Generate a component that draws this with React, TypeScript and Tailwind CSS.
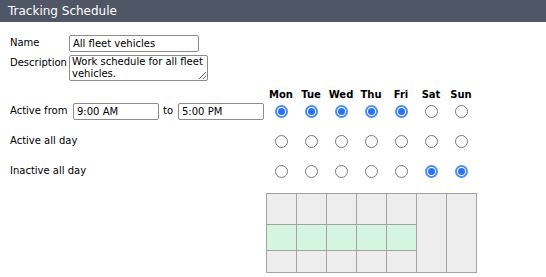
const days = ["Mon", "Tue", "Wed", "Thu", "Fri", "Sat", "Sun"];

const rows = [
  { label: "Active from", checked: [true, true, true, true, true, false, false] },
  { label: "Active all day", checked: [false, false, false, false, false, false, false] },
  { label: "Inactive all day", checked: [false, false, false, false, false, true, true] },
];

function Radio({ on }: { on: boolean }) {
  if (on) {
    return (
      <span className="flex h-[13px] w-[13px] items-center justify-center rounded-full border-2 border-[#4a8ef6] bg-white">
        <span className="h-[7px] w-[7px] rounded-full bg-[#2c72ea]" />
      </span>
    );
  }
  return <span className="block h-[13px] w-[13px] rounded-full border border-[#7a7a7a] bg-white" />;
}

const inputCls =
  "h-[17px] rounded-[2px] border border-[#8c8c8c] bg-white px-[3px] text-[10px] leading-[15px] text-black outline-none";

export default function App() {
  return (
    <div className="h-[277px] w-[546px] overflow-hidden bg-white font-['DejaVu_Sans',Verdana,sans-serif] text-[10px] leading-[12px] text-black">
      <div className="flex h-[22px] items-center bg-[#4f5767] px-[8px] text-[12px] text-white">Tracking Schedule</div>

      <div className="pl-[10px] pt-[13px]">
        <div className="flex">
          <span className="w-[59px] pt-[2px]">Name</span>
          <input className={`${inputCls} w-[130px]`} defaultValue="All fleet vehicles" />
        </div>
        <div className="mt-[3px] flex">
          <span className="w-[59px] pt-[2px]">Description</span>
          <textarea
            className="h-[26px] w-[139px] rounded-[2px] border border-[#8c8c8c] bg-white px-[2px] py-0 text-[10px] leading-[12px] text-black outline-none"
            defaultValue="Work schedule for all fleet vehicles."
          />
        </div>

        <div className="mt-[8px] grid grid-cols-[256px_repeat(7,30px)]">
          <div />
          {days.map((d) => (
            <div key={d} className="text-center font-bold">
              {d}
            </div>
          ))}

          {rows.map((r, i) => (
            <div key={r.label} className={`contents`}>
              <div className={`flex h-[20px] items-center ${i > 0 ? "mt-[10px]" : ""}`}>
                <span className={i === 0 ? "w-[63px]" : ""}>{r.label}</span>
                {i === 0 && (
                  <>
                    <input className={`${inputCls} w-[86px]`} defaultValue="9:00 AM" />
                    <span className="ml-[4px] w-[15px]">to</span>
                    <input className={`${inputCls} w-[86px]`} defaultValue="5:00 PM" />
                  </>
                )}
              </div>
              {r.checked.map((c, j) => (
                <div key={j} className={`flex h-[20px] items-center justify-center ${i > 0 ? "mt-[10px]" : ""}`}>
                  <Radio on={c} />
                </div>
              ))}
            </div>
          ))}

          <div />
          <div className="col-span-7 mt-[12px] flex h-[80px] w-[211px] border-y border-l border-[#a3a3a3] bg-[#ededed]">
            {days.map((d, j) => (
              <div key={d} className="flex w-[30px] flex-col border-r border-[#a3a3a3]">
                {j < 5 && (
                  <>
                    <div className="h-[30px]" />
                    <div className="h-[27px] border-y border-[#a3a3a3] bg-[#d5f5e0]" />
                  </>
                )}
              </div>
            ))}
          </div>
        </div>
      </div>
    </div>
  );
}
